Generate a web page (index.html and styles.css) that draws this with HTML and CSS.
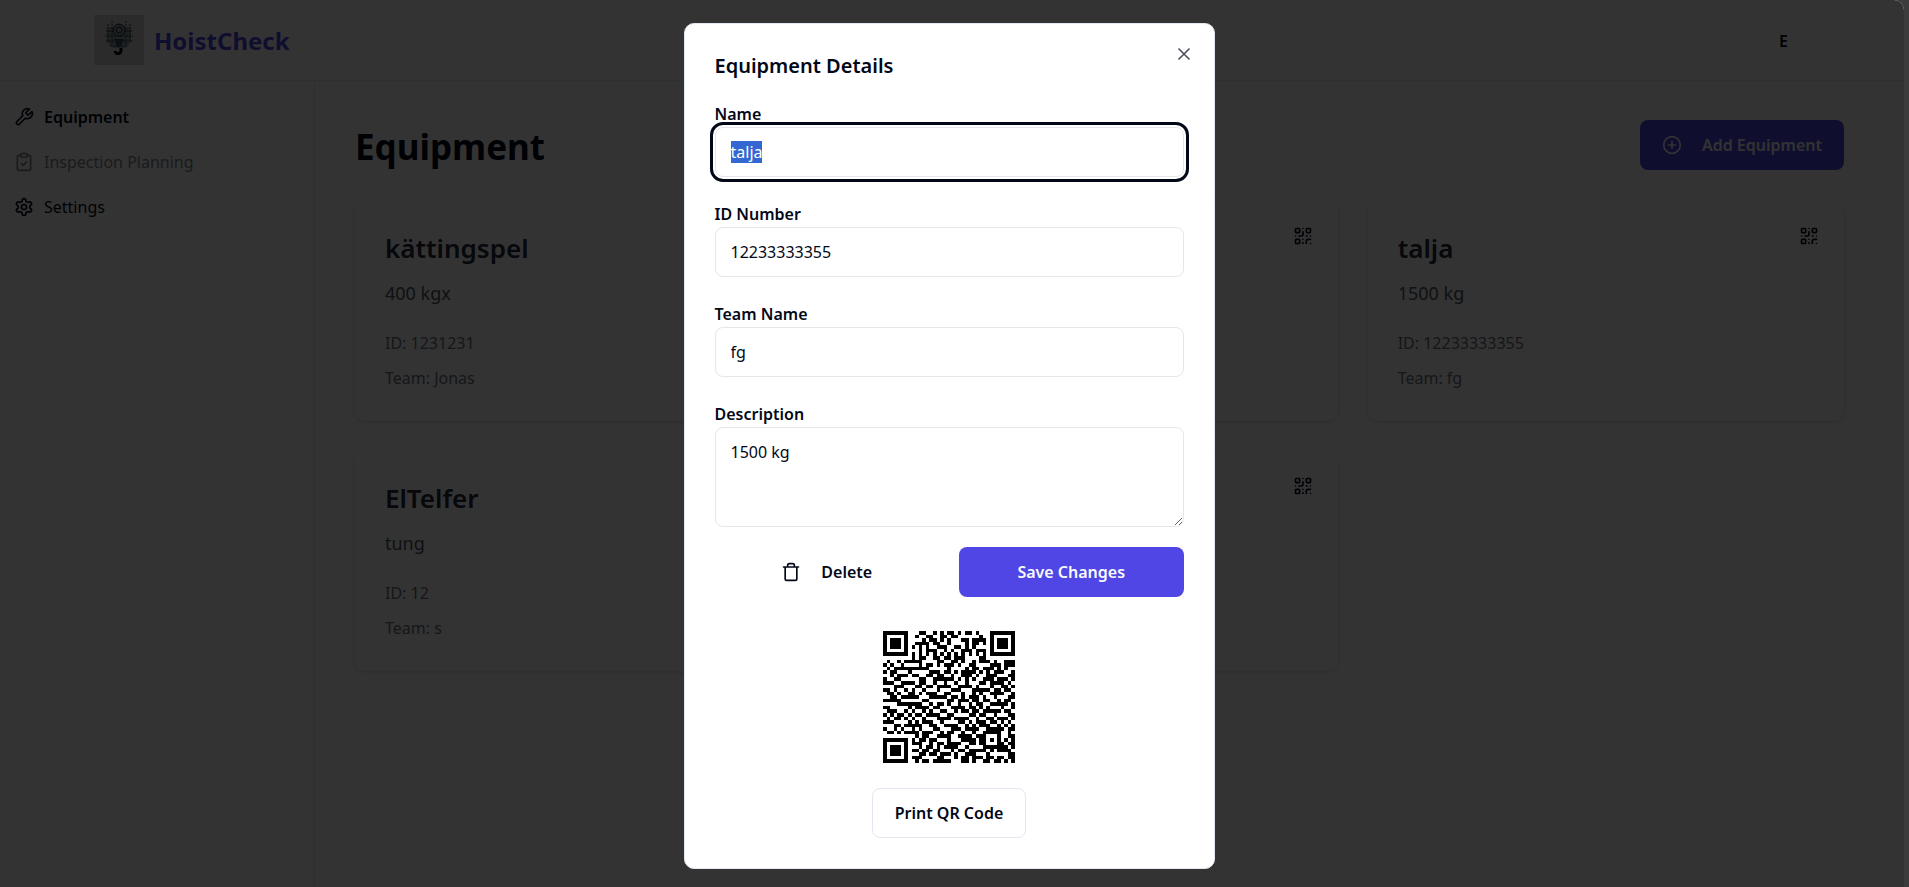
FILE: index.html
```html
<!DOCTYPE html>
<html lang="en">
<head>
    <meta charset="UTF-8">
    <meta name="viewport" content="width=device-width, initial-scale=1.0">
    <title>HoistCheck</title>
    <link rel="stylesheet" href="styles.css">
</head>
<body>
    <!-- Shared icons -->
    <svg class="sprite" aria-hidden="true">
        <symbol id="icon-qr" viewBox="0 0 24 24">
            <rect width="5" height="5" x="3" y="3" rx="1"/>
            <rect width="5" height="5" x="16" y="3" rx="1"/>
            <rect width="5" height="5" x="3" y="16" rx="1"/>
            <path d="M21 16h-3a2 2 0 0 0-2 2v3M21 21v.01M12 7v3a2 2 0 0 1-2 2H7M3 12h.01M12 3h.01M12 16v.01M16 12h1M21 12v.01M12 21v-1"/>
        </symbol>
    </svg>

    <div class="window">
        <header class="header">
            <a class="brand" href="#">
                <svg class="logo" viewBox="0 0 50 50" aria-hidden="true">
                    <rect width="50" height="50" fill="#d8d8d8"/>
                    <path d="M13 12h24v15l-6 6H19l-6-6z" fill="#8fa3a9"/>
                    <path d="M14 9v18M18 6v25M32 6v25M36 9v18M12 16h26M11 21h28M12 26h26M16 31h18" stroke="#33474f" stroke-width="1" stroke-dasharray="2 1" fill="none"/>
                    <circle cx="25" cy="15" r="6" fill="#8fa0a5" stroke="#1f2c33" stroke-width="1"/>
                    <circle cx="25" cy="15" r="3" fill="none" stroke="#1f2c33" stroke-width="1"/>
                    <path d="M20 24h10l-3 8h-4z" fill="#35535f"/>
                    <path d="M27 33v2a3 3 0 1 1-6 1" fill="none" stroke="#000" stroke-width="3"/>
                </svg>
                <span>HoistCheck</span>
            </a>
            <button class="avatar" type="button">E</button>
        </header>

        <div class="layout">
            <nav class="sidebar">
                <a class="nav-link active" href="#">
                    <svg class="icon" viewBox="0 0 24 24"><path d="M14.7 6.3a1 1 0 0 0 0 1.4l1.6 1.6a1 1 0 0 0 1.4 0l3.77-3.77a6 6 0 0 1-7.94 7.94l-6.91 6.91a2.12 2.12 0 0 1-3-3l6.91-6.91a6 6 0 0 1 7.94-7.94l-3.76 3.76z"/></svg>
                    Equipment
                </a>
                <a class="nav-link disabled" href="#">
                    <svg class="icon" viewBox="0 0 24 24"><rect width="8" height="4" x="8" y="2" rx="1"/><path d="M16 4h2a2 2 0 0 1 2 2v14a2 2 0 0 1-2 2H6a2 2 0 0 1-2-2V6a2 2 0 0 1 2-2h2M9 14l2 2 4-4"/></svg>
                    Inspection Planning
                </a>
                <a class="nav-link" href="#">
                    <svg class="icon" viewBox="0 0 24 24"><path d="M12.22 2h-.44a2 2 0 0 0-2 2v.18a2 2 0 0 1-1 1.73l-.43.25a2 2 0 0 1-2 0l-.15-.08a2 2 0 0 0-2.73.73l-.22.38a2 2 0 0 0 .73 2.73l.15.1a2 2 0 0 1 1 1.72v.51a2 2 0 0 1-1 1.74l-.15.09a2 2 0 0 0-.73 2.73l.22.38a2 2 0 0 0 2.73.73l.15-.08a2 2 0 0 1 2 0l.43.25a2 2 0 0 1 1 1.73V20a2 2 0 0 0 2 2h.44a2 2 0 0 0 2-2v-.18a2 2 0 0 1 1-1.73l.43-.25a2 2 0 0 1 2 0l.15.08a2 2 0 0 0 2.73-.73l.22-.39a2 2 0 0 0-.73-2.73l-.15-.08a2 2 0 0 1-1-1.74v-.5a2 2 0 0 1 1-1.74l.15-.09a2 2 0 0 0 .73-2.73l-.22-.38a2 2 0 0 0-2.73-.73l-.15.08a2 2 0 0 1-2 0l-.43-.25a2 2 0 0 1-1-1.73V4a2 2 0 0 0-2-2z"/><circle cx="12" cy="12" r="3"/></svg>
                    Settings
                </a>
            </nav>

            <main class="content">
                <div class="page-head">
                    <h1>Equipment</h1>
                    <button class="btn btn-primary" type="button">
                        <svg class="icon" viewBox="0 0 24 24"><circle cx="12" cy="12" r="10"/><path d="M8 12h8M12 8v8"/></svg>
                        Add Equipment
                    </button>
                </div>

                <div class="cards">
                    <article class="card">
                        <div class="card-info">
                            <h2>kättingspel</h2>
                            <p class="card-desc">400 kgx</p>
                            <p class="card-meta">ID: 1231231</p>
                            <p class="card-meta">Team: Jonas</p>
                        </div>
                        <svg class="icon"><use href="#icon-qr"/></svg>
                    </article>
                    <article class="card">
                        <div class="card-info"></div>
                        <svg class="icon"><use href="#icon-qr"/></svg>
                    </article>
                    <article class="card">
                        <div class="card-info">
                            <h2>talja</h2>
                            <p class="card-desc">1500 kg</p>
                            <p class="card-meta">ID: 12233333355</p>
                            <p class="card-meta">Team: fg</p>
                        </div>
                        <svg class="icon"><use href="#icon-qr"/></svg>
                    </article>
                    <article class="card">
                        <div class="card-info">
                            <h2>ElTelfer</h2>
                            <p class="card-desc">tung</p>
                            <p class="card-meta">ID: 12</p>
                            <p class="card-meta">Team: s</p>
                        </div>
                        <svg class="icon"><use href="#icon-qr"/></svg>
                    </article>
                    <article class="card">
                        <div class="card-info"></div>
                        <svg class="icon"><use href="#icon-qr"/></svg>
                    </article>
                </div>
            </main>
        </div>

        <!-- Equipment dialog -->
        <div class="overlay">
            <div class="modal" role="dialog" aria-modal="true" aria-labelledby="modalTitle">
                <h2 id="modalTitle" class="modal-title">Equipment Details</h2>
                <button class="close" type="button" aria-label="Close">
                    <svg class="icon" viewBox="0 0 24 24"><path d="M18 6 6 18M6 6l12 12"/></svg>
                </button>

                <form class="form">
                    <div class="field">
                        <label for="name">Name</label>
                        <input type="text" id="name" value="talja" autocomplete="off">
                    </div>
                    <div class="field">
                        <label for="idNumber">ID Number</label>
                        <input type="text" id="idNumber" value="12233333355">
                    </div>
                    <div class="field">
                        <label for="team">Team Name</label>
                        <input type="text" id="team" value="fg">
                    </div>
                    <div class="field">
                        <label for="description">Description</label>
                        <textarea id="description">1500 kg</textarea>
                    </div>
                    <div class="actions">
                        <button class="btn btn-ghost" type="button">
                            <svg class="icon" viewBox="0 0 24 24"><path d="M3 6h18M19 6v14c0 1-1 2-2 2H7c-1 0-2-1-2-2V6M8 6V4c0-1 1-2 2-2h4c1 0 2 1 2 2v2"/></svg>
                            Delete
                        </button>
                        <button class="btn btn-primary" type="button">Save Changes</button>
                    </div>
                </form>

                <div class="qr">
                    <svg class="qr-code" viewBox="0 0 37 37" shape-rendering="crispEdges" role="img" aria-label="QR code"><path id="qrPath"/></svg>
                    <button class="btn btn-outline" type="button">Print QR Code</button>
                </div>
            </div>
        </div>
    </div>

    <script src="script.js"></script>
</body>
</html>
```
FILE: styles.css
```css
* {
    box-sizing: border-box;
}
body {
    margin: 0;
    background: #3c3c3c;
    color: #020817;
    font-family: "Noto Sans", "Open Sans", sans-serif;
    font-size: 16px;
    line-height: 24px;
}
h1, h2, p {
    margin: 0;
}
a {
    color: inherit;
    text-decoration: none;
}
button, input, textarea {
    font: inherit;
    color: inherit;
}
.sprite {
    display: none;
}
.icon {
    width: 20px;
    height: 20px;
    flex-shrink: 0;
    fill: none;
    stroke: currentColor;
    stroke-width: 2;
    stroke-linecap: round;
    stroke-linejoin: round;
}
.window {
    position: relative;
    display: flex;
    flex-direction: column;
    min-height: 100vh;
    margin-right: 5px;
    background: #fff;
    border-radius: 0 10px 0 0;
    overflow: hidden;
}

/* Header */
.header {
    display: flex;
    align-items: center;
    justify-content: space-between;
    height: 81px;
    padding: 0 110px 0 94px;
    border-bottom: 1px solid #e2e8f0;
}
.brand {
    display: flex;
    align-items: center;
    gap: 10px;
    color: #4f46e5;
    font-size: 24px;
    line-height: 30px;
    font-weight: 700;
}
.brand span, .avatar {
    padding-top: 2px;
}
.logo {
    width: 50px;
    height: 50px;
}
.avatar {
    border: none;
    background: none;
    font-weight: 600;
}

/* Sidebar */
.layout {
    display: flex;
    flex: 1;
}
.sidebar {
    display: flex;
    flex-direction: column;
    gap: 15px;
    width: 315px;
    padding: 21px 14px;
    border-right: 1px solid #e2e8f0;
}
.nav-link {
    display: flex;
    align-items: center;
    gap: 10px;
    height: 30px;
}
.nav-link.active {
    font-weight: 600;
}
.nav-link.disabled {
    opacity: .5;
}

/* Content */
.content {
    flex: 1;
    padding: 39px 60px 40px 40px;
}
.page-head {
    display: flex;
    align-items: center;
    justify-content: space-between;
    margin-bottom: 31px;
}
h1 {
    padding-top: 2px;
    font-size: 35px;
    line-height: 45px;
    font-weight: 700;
}
.cards {
    display: grid;
    grid-template-columns: repeat(3, 1fr);
    gap: 30px;
}
.card {
    display: flex;
    align-items: flex-start;
    justify-content: space-between;
    height: 220px;
    padding: 25px;
    padding-left: 30px;
    border-radius: 10px;
    box-shadow: 0 1px 4px rgba(0, 0, 0, .14);
}
.card h2 {
    font-size: 26px;
    line-height: 45px;
    font-weight: 600;
    color: #1f2937;
}
.card-desc {
    margin-bottom: 10px;
    font-size: 18px;
    line-height: 45px;
    color: #4b5563;
}
.card-meta {
    line-height: 35px;
    color: #6b7280;
}

/* Buttons */
.btn {
    display: inline-flex;
    align-items: center;
    justify-content: center;
    gap: 20px;
    height: 50px;
    padding: 0 22px;
    border: none;
    border-radius: 8px;
    font-weight: 600;
    cursor: pointer;
}
.btn-primary {
    background: #4f46e5;
    color: #f8fafc;
}
.btn-ghost {
    background: none;
}
.btn-outline {
    background: #fff;
    border: 1px solid #e2e8f0;
}

/* Dialog */
.overlay {
    position: absolute;
    inset: 0;
    display: flex;
    align-items: center;
    justify-content: center;
    padding: 4px 6px 0 0;
    background: rgba(0, 0, 0, .8);
}
.modal {
    position: relative;
    width: 531px;
    padding: 30px;
    background: #fff;
    border: 1px solid #e2e8f0;
    border-radius: 10px;
}
.modal-title {
    margin-bottom: 24px;
    font-size: 20px;
    line-height: 24px;
    font-weight: 600;
}
.close {
    position: absolute;
    top: 20px;
    right: 20px;
    display: flex;
    padding: 0;
    border: none;
    background: none;
    opacity: .7;
}
.field {
    display: flex;
    flex-direction: column;
    margin-bottom: 25px;
}
.field:nth-child(4) {
    margin-bottom: 20px;
}
.field label {
    line-height: 25px;
    font-weight: 600;
}
.field input, .field textarea {
    width: 100%;
    height: 50px;
    padding: 10px 15px;
    background: #fff;
    border: 1px solid #e5e7eb;
    border-radius: 8px;
}
.field textarea {
    display: block;
    height: 100px;
    padding: 12px 15px;
}
.field input:focus {
    outline: 3px solid #020817;
    outline-offset: 2px;
}
.field input::selection {
    background: #3367d1;
    color: #fff;
}
.actions {
    display: grid;
    grid-template-columns: 1fr 1fr;
    gap: 20px;
}
.qr {
    display: flex;
    flex-direction: column;
    align-items: center;
    gap: 25px;
    margin-top: 34px;
}
.qr-code {
    width: 132px;
    height: 132px;
}
```
FILE: script.js
```js
// 37 modules per row, packed as hex
const qrRows = [
    "0032b5a400", "004cd81500", "0016a37c00", "007b216a00", "00a9cd4300", "002e53b900", "0055555500", "00b36e1800",
    "4be19a5d38", "a62d74c3b8", "5ff8216ea0", "b1076bd5c8", "2ecd93a718", "9833f54ee8", "e7b2491bd0", "1c6de7a268",
    "d2911c7db0", "6bae6253c8", "35c7dae918", "fa18376cb0", "0de5a4b3e8", "c37b1ed448", "7294cb6fb0", "ad6f30d918",
    "5a91ef26e8", "e35c86bb50", "1be6795ca8", "94a31de7d8", "6bdcb24f90", "0059e7b518", "00b623dfa8", "00e5bcd158",
    "002d7906e8", "00db16faf0", "0036e9c418", "00e18b76d8", "005be34da8"
];

const size = 37;
const grid = qrRows.map(row => {
    const bits = [...row].map(d => parseInt(d, 16).toString(2).padStart(4, "0")).join("");
    return [...bits.slice(0, size)].map(Number);
});

// Concentric squares: finder marks (radius 3) and the alignment mark (radius 2)
function drawMark(cx, cy, radius) {
    for (let y = -radius - 1; y <= radius + 1; y++) {
        for (let x = -radius - 1; x <= radius + 1; x++) {
            const d = Math.max(Math.abs(x), Math.abs(y));
            if (grid[cy + y] === undefined || grid[cy + y][cx + x] === undefined) continue;
            if (radius === 2 && d > 2) continue;
            grid[cy + y][cx + x] = d === radius || d <= radius - 2 ? 1 : 0;
        }
    }
}

for (let i = 8; i < size - 8; i++) {
    grid[6][i] = grid[i][6] = i % 2 ? 0 : 1;
}
drawMark(3, 3, 3);
drawMark(size - 4, 3, 3);
drawMark(3, size - 4, 3);
drawMark(30, 30, 2);

let path = "";
grid.forEach((row, y) => row.forEach((on, x) => {
    if (on) path += `M${x} ${y}h1v1h-1z`;
}));
document.getElementById("qrPath").setAttribute("d", path);

const nameInput = document.getElementById("name");
nameInput.focus();
nameInput.select();
```
